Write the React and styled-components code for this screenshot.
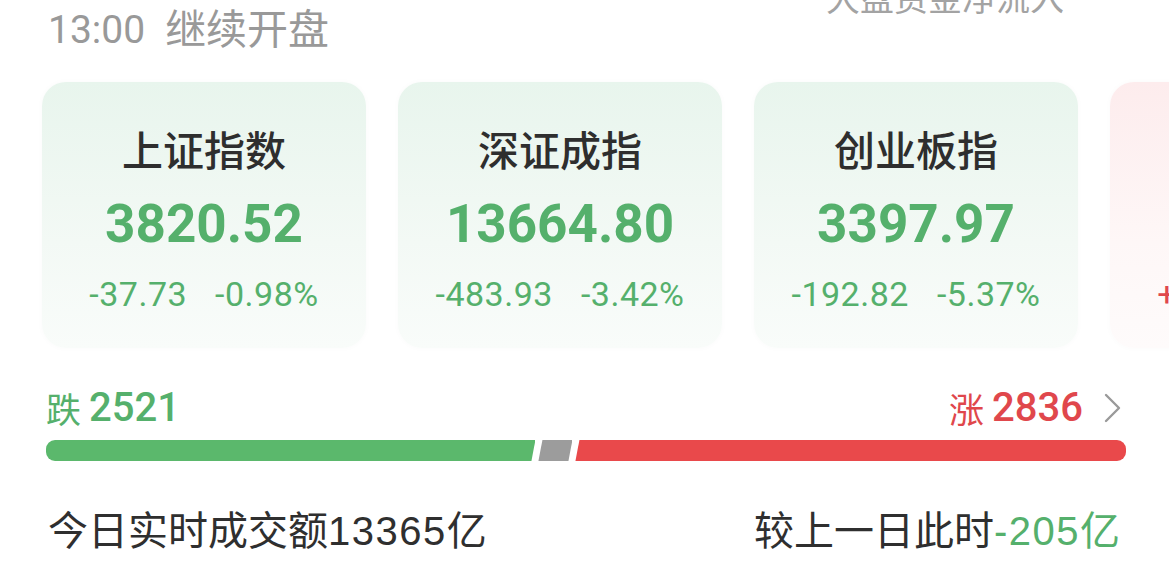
import styled, { createGlobalStyle } from "styled-components";

const GREEN = "#55b06c";
const RED = "#e0474c";

const indices = [
  { name: "上证指数", value: "3820.52", change: "-37.73", pct: "-0.98%", up: false },
  { name: "深证成指", value: "13664.80", change: "-483.93", pct: "-3.42%", up: false },
  { name: "创业板指", value: "3397.97", change: "-192.82", pct: "-5.37%", up: false },
  { name: "北证50", value: "1392.52", change: "+5.08", pct: "+0.37%", up: true },
];

const breadth = { down: 2521, flat: 0, up: 2836 };

const GlobalStyle = createGlobalStyle`
  body {
    margin: 0;
    background: #fff;
    overflow: hidden;
    font-family: "Roboto", "Noto Sans CJK SC", sans-serif;
  }
`;

const App = () => {
  return (
    <Page>
      <GlobalStyle />
      <Header>
        <Status>
          <Time>13:00</Time>
          <span>继续开盘</span>
        </Status>
        <FlowLabel>大盘资金净流入</FlowLabel>
      </Header>

      <CardRow>
        {indices.map(item => (
          <Card key={item.name} $up={item.up}>
            <CardTitle>{item.name}</CardTitle>
            <CardValue $up={item.up}>{item.value}</CardValue>
            <ChangeRow $up={item.up}>
              <span>{item.change}</span>
              <span>{item.pct}</span>
            </ChangeRow>
          </Card>
        ))}
      </CardRow>

      <BreadthRow>
        <Count $up={false}>
          <CountLabel>跌</CountLabel>
          <CountNum>{breadth.down}</CountNum>
        </Count>
        <Count $up={true}>
          <CountLabel>涨</CountLabel>
          <CountNum>{breadth.up}</CountNum>
          <Chevron width="17" height="30" viewBox="0 0 17 30">
            <polyline points="2,2 15,15 2,28" fill="none" stroke="#9a9a9a" strokeWidth="2.4" strokeLinecap="round" strokeLinejoin="round" />
          </Chevron>
        </Count>
      </BreadthRow>

      <Bar>
        <Segment $kind="down" style={{ flexGrow: breadth.down }} />
        <Segment $kind="flat" />
        <Segment $kind="up" style={{ flexGrow: breadth.up }} />
      </Bar>

      <Summary>
        <span>今日实时成交额<Digits>13365</Digits>亿</span>
        <span>较上一日此时<Delta><Digits>-205</Digits>亿</Delta></span>
      </Summary>
    </Page>
  );
};

export default App;

const Page = styled.div`
  width: 1169px;
  box-sizing: border-box;
  padding: 0 43px 0 46px;
  color: #333;
`;

const Header = styled.div`
  margin-top: -22px;
  height: 72px;
  display: flex;
  justify-content: space-between;
`;

const Status = styled.div`
  align-self: flex-end;
  display: flex;
  align-items: center;
  gap: 20px;
  margin-bottom: -3px;
  font-size: 41px;
  line-height: 46px;
  color: #999;
`;

const Time = styled.span`
  font-family: "Roboto", sans-serif;
  font-size: 39px;
  padding-left: 2px;
`;

const FlowLabel = styled.div`
  align-self: flex-start;
  margin-right: 62px;
  font-family: "Noto Sans CJK SC", sans-serif;
  font-size: 34px;
  line-height: 38px;
  color: #a3a3a3;
`;

const CardRow = styled.div`
  display: flex;
  gap: 32px;
  margin: 32px 0 0 -4px;
`;

const Card = styled.div`
  flex: 0 0 324px;
  height: 266px;
  box-sizing: border-box;
  padding-top: 42px;
  border-radius: 24px;
  display: flex;
  flex-direction: column;
  align-items: center;
  background: ${p => p.$up
    ? "linear-gradient(180deg, #fdeced 0%, #fef7f7 60%, #fefbfb 100%)"
    : "linear-gradient(180deg, #e8f5ed 0%, #f3f9f5 60%, #f9fcfa 100%)"};
  box-shadow: 0 0 6px rgba(0, 0, 0, 0.025);
`;

const CardTitle = styled.div`
  font-family: "Noto Sans CJK SC", sans-serif;
  font-size: 41px;
  font-weight: 500;
  line-height: 48px;
  color: #2e2e2e;
`;

const CardValue = styled.div`
  margin-top: 22px;
  font-family: "Roboto", sans-serif;
  font-size: 53px;
  font-weight: 700;
  line-height: 60px;
  color: ${p => (p.$up ? RED : GREEN)};
`;

const ChangeRow = styled.div`
  margin-top: 20px;
  display: flex;
  gap: 28px;
  font-family: "Roboto", sans-serif;
  font-size: 34px;
  line-height: 40px;
  letter-spacing: 0.5px;
  color: ${p => (p.$up ? RED : GREEN)};
`;

const BreadthRow = styled.div`
  margin-top: 38px;
  height: 44px;
  display: flex;
  justify-content: space-between;
  align-items: center;
`;

const Count = styled.div`
  display: flex;
  align-items: center;
  gap: 8px;
  color: ${p => (p.$up ? RED : GREEN)};
`;

const CountLabel = styled.span`
  font-family: "Noto Sans CJK SC", sans-serif;
  font-size: 35px;
  line-height: 44px;
`;

const CountNum = styled.span`
  font-family: "Roboto", sans-serif;
  font-size: 40px;
  font-weight: 500;
  line-height: 44px;
`;

const Chevron = styled.svg`
  margin: 0 5px 0 13px;
`;

const Bar = styled.div`
  margin-top: 10px;
  height: 21px;
  display: flex;
  gap: 3px;
`;

const segmentShape = {
  down: `
    background: #5bb86c;
    border-radius: 9px 0 0 9px;
    clip-path: polygon(0 0, 100% 0, calc(100% - 4px) 100%, 0 100%);
  `,
  flat: `
    flex: 0 0 34px;
    background: #9c9c9c;
    clip-path: polygon(4px 0, 100% 0, calc(100% - 4px) 100%, 0 100%);
  `,
  up: `
    background: #e9494b;
    border-radius: 0 9px 9px 0;
    clip-path: polygon(4px 0, 100% 0, 100% 100%, 0 100%);
  `,
};

const Segment = styled.div`
  flex-basis: 0;
  ${p => segmentShape[p.$kind]}
`;

const Summary = styled.div`
  margin-top: 44px;
  height: 48px;
  display: flex;
  justify-content: space-between;
  align-items: center;
  padding: 0 6px 0 2px;
  font-family: "Noto Sans CJK SC", sans-serif;
  font-size: 40px;
  line-height: 48px;
  color: #2f2f2f;
`;

const Digits = styled.span`
  font-family: "Liberation Sans", sans-serif;
  letter-spacing: 1.5px;
`;

const Delta = styled.span`
  color: ${GREEN};
`;
